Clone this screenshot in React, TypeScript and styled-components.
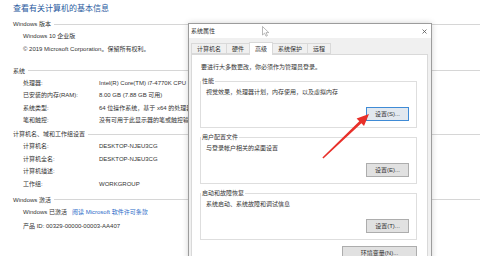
import React from 'react';
import styled, { createGlobalStyle } from 'styled-components';

const FONT = `"Liberation Sans", "Noto Sans CJK SC", sans-serif`;

const GlobalStyle = createGlobalStyle`
  html, body { margin: 0; padding: 0; background: #fff; }
  body { font-family: ${FONT}; }
`;

const Screen = styled.div`
  position: relative;
  width: 480px;
  height: 256px;
  overflow: hidden;
  background: #fff;
  color: #333;
  font-family: ${FONT};
  font-size: 6px;
`;

const Content = styled.div`
  display: flex;
  flex-direction: column;
  padding: 3px 0 0 13px;
`;

const Title = styled.h1`
  margin: 0;
  font-size: 8px;
  line-height: 11px;
  font-weight: normal;
  color: #2a5aa0;
  white-space: nowrap;
`;

const Section = styled.section<{ $mt: number }>`
  display: flex;
  flex-direction: column;
  margin-top: ${(p) => p.$mt}px;
`;

const SectionHeader = styled.div`
  display: flex;
  align-items: center;
  gap: 3px;
  height: 12px;
  line-height: 12px;
  white-space: nowrap;
`;

const Rule = styled.div`
  flex: 1;
  height: 1px;
  background: #d6d6d6;
`;

const InfoRow = styled.div`
  display: grid;
  grid-template-columns: 76px auto;
  padding-left: 10px;
  height: 12.5px;
  line-height: 12.5px;
  white-space: nowrap;
`;

const TextLine = styled.div<{ $mt?: number }>`
  padding-left: 10px;
  height: 12.5px;
  line-height: 12.5px;
  white-space: nowrap;
  margin-top: ${(p) => p.$mt ?? 0}px;
`;

const Link = styled.span`
  color: #2a6ac8;
  margin-left: 5px;
`;

const Dialog = styled.div`
  position: absolute;
  left: 188px;
  top: 23px;
  width: 244px;
  height: 245px;
  box-sizing: border-box;
  border: 1px solid #9c9c9c;
  background: #f0f0f0;
  box-shadow: 0 0 6px rgba(0, 0, 0, 0.18);
  display: flex;
  flex-direction: column;
`;

const TitleBar = styled.div`
  height: 14px;
  background: #fff;
  display: flex;
  align-items: center;
  justify-content: space-between;
  padding: 0 4px 0 2px;
  line-height: 14px;
`;

const CloseIcon = styled.svg`
  width: 5px;
  height: 5px;
  display: block;
`;

const DialogBody = styled.div`
  flex: 1;
  display: flex;
  flex-direction: column;
  padding: 4px 3px 0 2px;
`;

const TabStrip = styled.div`
  display: flex;
  align-items: flex-end;
  height: 12px;
`;

const Tab = styled.div<{ $active?: boolean }>`
  position: relative;
  z-index: ${(p) => (p.$active ? 2 : 1)};
  box-sizing: border-box;
  height: ${(p) => (p.$active ? 13 : 11)}px;
  line-height: ${(p) => (p.$active ? 12 : 10)}px;
  padding: 0 5px;
  border: 1px solid #d9d9d9;
  border-bottom: ${(p) => (p.$active ? 'none' : '1px solid #d9d9d9')};
  background: ${(p) => (p.$active ? '#fff' : '#f0f0f0')};
  margin-left: -1px;
  margin-bottom: ${(p) => (p.$active ? -1 : 0)}px;
  white-space: nowrap;
  &:first-child {
    margin-left: 0;
  }
`;

const Panel = styled.div`
  flex: 1;
  background: #fff;
  border: 1px solid #d9d9d9;
  padding: 8px 10px 0 8px;
  display: flex;
  flex-direction: column;
`;

const Note = styled.div`
  margin-left: 1px;
  line-height: 9px;
  white-space: nowrap;
`;

const Group = styled.div`
  margin-top: 9px;
  border: 1px solid #dedede;
  display: flex;
  flex-direction: column;
  padding: 0 7px 6px 5px;
`;

const GroupLabel = styled.div`
  align-self: flex-start;
  margin: -5px 0 0 -5px;
  padding: 0 1px;
  background: #fff;
  line-height: 9px;
  white-space: nowrap;
`;

const GroupText = styled.div`
  margin-top: 2px;
  line-height: 9px;
  white-space: nowrap;
`;

const Button = styled.button<{ $focused?: boolean; $w?: number; $mt?: number }>`
  align-self: flex-end;
  box-sizing: border-box;
  width: ${(p) => p.$w ?? 43}px;
  height: 14px;
  margin-top: ${(p) => p.$mt ?? 10}px;
  padding: 0;
  font-family: ${FONT};
  font-size: 6px;
  line-height: 12px;
  color: #333;
  background: ${(p) => (p.$focused ? '#e2e8ef' : '#e1e1e1')};
  border: 1px solid ${(p) => (p.$focused ? '#3f8bd6' : '#adadad')};
  white-space: nowrap;
`;

const ArrowSvg = styled.svg`
  position: absolute;
  left: 320px;
  top: 110px;
  width: 52px;
  height: 52px;
  pointer-events: none;
`;

const CursorSvg = styled.svg`
  position: absolute;
  left: 262px;
  top: 26px;
  width: 8px;
  height: 11px;
  pointer-events: none;
`;

export default function App() {
  return (
    <>
      <GlobalStyle />
      <Screen>
        <Content>
          <Title>查看有关计算机的基本信息</Title>
          <Section $mt={4.3}>
            <SectionHeader>
              <span>Windows 版本</span>
              <Rule />
            </SectionHeader>
            <TextLine>Windows 10 企业版</TextLine>
            <TextLine>© 2019 Microsoft Corporation。保留所有权利。</TextLine>
          </Section>
          <Section $mt={9.7}>
            <SectionHeader>
              <span>系统</span>
              <Rule />
            </SectionHeader>
            <InfoRow>
              <span>处理器:</span>
              <span>Intel(R) Core(TM) i7-4770K CPU</span>
            </InfoRow>
            <InfoRow>
              <span>已安装的内存(RAM):</span>
              <span>8.00 GB (7.88 GB 可用)</span>
            </InfoRow>
            <InfoRow>
              <span>系统类型:</span>
              <span>64 位操作系统，基于 x64 的处理器</span>
            </InfoRow>
            <InfoRow>
              <span>笔和触控:</span>
              <span>没有可用于此显示器的笔或触控输入</span>
            </InfoRow>
          </Section>
          <Section $mt={1.3}>
            <SectionHeader>
              <span>计算机名、域和工作组设置</span>
              <Rule />
            </SectionHeader>
            <InfoRow>
              <span>计算机名:</span>
              <span>DESKTOP-NJEU3CG</span>
            </InfoRow>
            <InfoRow>
              <span>计算机全名:</span>
              <span>DESKTOP-NJEU3CG</span>
            </InfoRow>
            <InfoRow>
              <span>计算机描述:</span>
              <span></span>
            </InfoRow>
            <InfoRow>
              <span>工作组:</span>
              <span>WORKGROUP</span>
            </InfoRow>
          </Section>
          <Section $mt={3.7}>
            <SectionHeader>
              <span>Windows 激活</span>
              <Rule />
            </SectionHeader>
            <TextLine>
              Windows 已激活<Link>阅读 Microsoft 软件许可条款</Link>
            </TextLine>
            <TextLine $mt={2}>产品 ID: 00329-00000-00003-AA407</TextLine>
          </Section>
        </Content>

        <Dialog>
          <TitleBar>
            <span>系统属性</span>
            <CloseIcon viewBox="0 0 5 5">
              <path d="M0.5 0.5 L4.5 4.5 M4.5 0.5 L0.5 4.5" stroke="#555" strokeWidth="0.8" />
            </CloseIcon>
          </TitleBar>
          <DialogBody>
            <TabStrip>
              <Tab>计算机名</Tab>
              <Tab>硬件</Tab>
              <Tab $active>高级</Tab>
              <Tab>系统保护</Tab>
              <Tab>远程</Tab>
            </TabStrip>
            <Panel>
              <Note>要进行大多数更改，你必须作为管理员登录。</Note>
              <Group>
                <GroupLabel>性能</GroupLabel>
                <GroupText>视觉效果，处理器计划，内存使用，以及虚拟内存</GroupText>
                <Button $focused>设置(S)...</Button>
              </Group>
              <Group>
                <GroupLabel>用户配置文件</GroupLabel>
                <GroupText>与登录帐户相关的桌面设置</GroupText>
                <Button>设置(E)...</Button>
              </Group>
              <Group>
                <GroupLabel>启动和故障恢复</GroupLabel>
                <GroupText>系统启动、系统故障和调试信息</GroupText>
                <Button>设置(T)...</Button>
              </Group>
              <Button $w={75} $mt={6}>环境变量(N)...</Button>
            </Panel>
          </DialogBody>
        </Dialog>

        <ArrowSvg viewBox="0 0 52 52">
          <path
            d="M2.4 47.6 L39.3 11.2 L36.6 8.6 L49 4 L44 16 L41.4 13.3 L3.4 48.6 Z"
            fill="#e8302a"
          />
        </ArrowSvg>

        <CursorSvg viewBox="0 0 8 11">
          <path
            d="M0.5 0.5 L0.5 9 L2.6 7.1 L4 10.2 L5.4 9.6 L4.1 6.6 L6.8 6.6 Z"
            fill="#fff"
            stroke="#8a8a8a"
            strokeWidth="0.6"
          />
        </CursorSvg>
      </Screen>
    </>
  );
}
